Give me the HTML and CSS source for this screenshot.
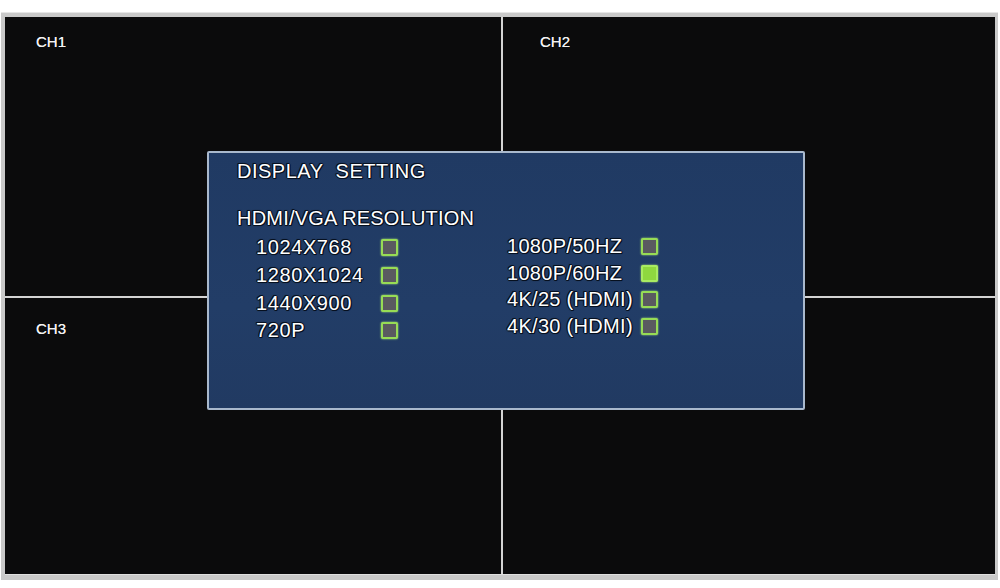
FILE: index.html
```html
<!DOCTYPE html>
<html>
<head>
<meta charset="utf-8">
<link rel="stylesheet" href="styles.css">
</head>
<body>
<div class="frame">
  <div class="grid">
    <div class="quad q1"><span class="ch">CH1</span></div>
    <div class="quad q2"><span class="ch">CH2</span></div>
    <div class="quad q3"><span class="ch">CH3</span></div>
    <div class="quad q4"></div>
  </div>
  <div class="dialog">
    <div class="title">DISPLAY&nbsp; SETTING</div>
    <div class="subtitle">HDMI/VGA RESOLUTION</div>
    <div class="options">
      <div class="col left">
        <div class="opt"><span class="lbl">1024X768</span><span class="box"></span></div>
        <div class="opt"><span class="lbl">1280X1024</span><span class="box"></span></div>
        <div class="opt"><span class="lbl">1440X900</span><span class="box"></span></div>
        <div class="opt"><span class="lbl">720P</span><span class="box"></span></div>
      </div>
      <div class="col right">
        <div class="opt"><span class="lbl">1080P/50HZ</span><span class="box"></span></div>
        <div class="opt"><span class="lbl">1080P/60HZ</span><span class="box on"></span></div>
        <div class="opt"><span class="lbl">4K/25 (HDMI)</span><span class="box"></span></div>
        <div class="opt"><span class="lbl">4K/30 (HDMI)</span><span class="box"></span></div>
      </div>
    </div>
  </div>
</div>
</body>
</html>
```

FILE: styles.css
```css
html, body {
  margin: 0;
  padding: 0;
  background: #ffffff;
  width: 1000px;
  height: 588px;
  overflow: hidden;
  font-family: "Liberation Sans", Arial, sans-serif;
}
.frame {
  position: relative;
  margin: 12px 0 0 1px;
  width: 990px;
  height: 557px;
  padding: 4px 3px 6px 4px;
  background: #c9c9c9;
  border-top: 1px solid #e6e6e6;
}
.grid {
  display: grid;
  grid-template-columns: 496px 492px;
  grid-template-rows: 279px 276px;
  gap: 2px;
  background: #d4d4d4;
  width: 990px;
  height: 557px;
  border-bottom: 1px solid #e0e0e0;
}
.quad {
  background: #0b0b0c;
  color: #f2f2f2;
  font-size: 15px;
  line-height: 18px;
  text-shadow: 0 0 0.6px #f2f2f2;
}
.q1 { padding: 16px 0 0 31px; }
.q2 { padding: 16px 0 0 37px; }
.q3 { padding: 22px 0 0 31px; }
.ch { display: inline-block; }

.dialog {
  position: absolute;
  left: 206px;
  top: 138px;
  width: 566px;
  height: 248px;
  padding: 7px 0 0 28px;
  background: linear-gradient(180deg, #203a63 0%, #223d67 60%, #213a62 100%);
  border: 2px solid #a9b9cd;
  border-radius: 2px;
  color: #ffffff;
  text-shadow: -1px 0 #06101f, 1px 0 #06101f, 0 -1px #06101f, 0 1px #06101f,
    1px 1px #06101f, -1px -1px #06101f, 0 0 2px #000;
}
.title {
  font-size: 20px;
  line-height: 23px;
  letter-spacing: 0.5px;
}
.subtitle {
  margin-top: 24px;
  font-size: 20px;
  line-height: 23px;
  letter-spacing: 0.2px;
}
.options {
  display: flex;
  margin-top: 4px;
  margin-left: 19px;
}
.col {
  display: flex;
  flex-direction: column;
}
.col.left { width: 251px; }
.col.right { margin-top: -1px; }
.opt {
  display: flex;
  align-items: center;
  font-size: 20px;
  letter-spacing: 0.6px;
}
.right .opt { letter-spacing: 0.3px; }
.left .opt { height: 27.7px; }
.right .opt { height: 26.8px; }
.left .lbl { width: 125px; }
.right .lbl { width: 134px; }
.box {
  width: 13px;
  height: 13px;
  border: 2px solid #97dc55;
  border-radius: 2px;
  background: #5a5a60;
  box-shadow: 0 0 2px #b6f07a;
}
.box.on {
  background: #8fd83f;
  border-color: #a9ec62;
}
```
